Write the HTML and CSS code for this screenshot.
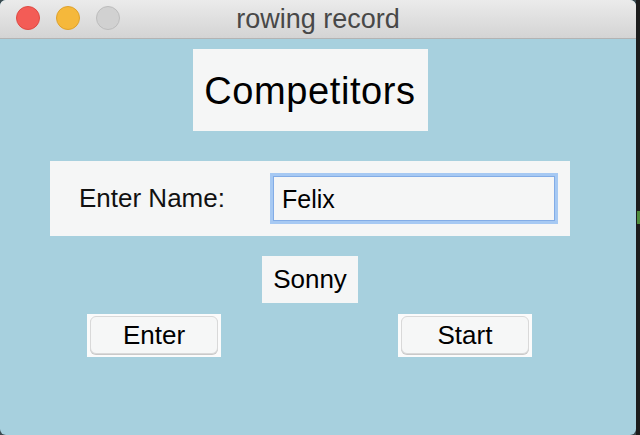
FILE: index.html
```html
<!DOCTYPE html>
<html lang="en">
<head>
<meta charset="utf-8">
<title>rowing record</title>
<link rel="stylesheet" href="styles.css">
</head>
<body>
<div class="screen">
  <div class="window">
    <div class="titlebar">
      <div class="lights">
        <span class="light red"></span>
        <span class="light yellow"></span>
        <span class="light gray"></span>
      </div>
      <div class="title">rowing record</div>
      <div></div>
    </div>
    <div class="content">
      <div class="heading">Competitors</div>
      <div class="form">
        <span class="label">Enter Name:</span>
        <div class="entry"><span class="entry-text">Felix</span></div>
      </div>
      <div class="name">Sonny</div>
      <div class="buttons">
        <div class="btn-frame"><button class="btn">Enter</button></div>
        <div class="btn-frame"><button class="btn">Start</button></div>
      </div>
    </div>
  </div>
  <div class="edge"><span class="blip"></span></div>
</div>
</body>
</html>
```
FILE: styles.css
```css
* { box-sizing: border-box; }
html, body { margin: 0; padding: 0; }
body {
  width: 640px;
  height: 435px;
  overflow: hidden;
  background: #3a4a50;
  font-family: "Liberation Sans", Arial, sans-serif;
}
.screen {
  display: flex;
  width: 640px;
  height: 435px;
}
.window {
  width: 636px;
  height: 435px;
  display: flex;
  flex-direction: column;
  border-radius: 6px;
  overflow: hidden;
  background: #a7d0de;
}
.titlebar {
  height: 39px;
  flex: none;
  display: grid;
  grid-template-columns: 1fr auto 1fr;
  background: linear-gradient(#ebebeb, #d4d4d4);
  border-bottom: 1px solid #b3b3b3;
}
.lights {
  display: flex;
  gap: 16px;
  padding-left: 16px;
  padding-top: 6px;
}
.light {
  width: 24px;
  height: 24px;
  border-radius: 50%;
  display: block;
}
.red { background: #f35c56; border: 1px solid #de4a43; }
.yellow { background: #f5b83b; border: 1px solid #dea12c; }
.gray { background: #d1d1d1; border: 1px solid #bcbcbc; }
.title {
  font-size: 27px;
  line-height: 38px;
  color: #484848;
}
.content {
  flex: 1;
  width: 620px;
  display: flex;
  flex-direction: column;
  align-items: center;
}
.heading {
  margin-top: 10px;
  width: 235px;
  height: 82px;
  background: #f5f6f6;
  display: flex;
  align-items: center;
  justify-content: center;
  font-size: 38px;
  letter-spacing: 0.6px;
  color: #000;
  padding-top: 2px;
}
.form {
  margin-top: 30px;
  width: 520px;
  height: 75px;
  background: #f5f6f6;
  display: flex;
  align-items: center;
  padding-left: 29px;
  padding-right: 12px;
}
.label {
  font-size: 26px;
  color: #111;
}
.entry {
  margin-left: auto;
  width: 288px;
  height: 51px;
  border: 3px solid #a6c9f3;
  box-shadow: inset 0 0 0 1px #82ace6;
  background: #f5f6f6;
  display: flex;
  align-items: center;
  padding-left: 9px;
  padding-top: 2px;
}
.entry-text {
  font-size: 25px;
  color: #000;
}
.name {
  margin-top: 20px;
  width: 96px;
  height: 47px;
  background: #f5f6f6;
  display: flex;
  align-items: center;
  justify-content: center;
  font-size: 26px;
  color: #000;
}
.buttons {
  margin-top: 11px;
  align-self: stretch;
  display: flex;
  padding-left: 87px;
  gap: 177px;
}
.btn-frame {
  width: 134px;
  height: 43px;
  background: #fbfbfb;
  padding: 2px 3px 3px 3px;
}
.btn {
  width: 100%;
  height: 100%;
  margin: 0;
  padding: 0;
  border: 1px solid #d9d9d9;
  border-radius: 6px;
  background: #f6f7f7;
  box-shadow: 0 1px 0 #c9c9c9;
  font-family: "Liberation Sans", Arial, sans-serif;
  font-size: 26px;
  color: #000;
}
.edge {
  width: 4px;
  height: 435px;
  background: #1c1c1c;
  display: flex;
  flex-direction: column;
}
.blip {
  display: block;
  margin-top: 211px;
  margin-left: 1px;
  width: 3px;
  height: 13px;
  background: #4f8c3c;
}
```
